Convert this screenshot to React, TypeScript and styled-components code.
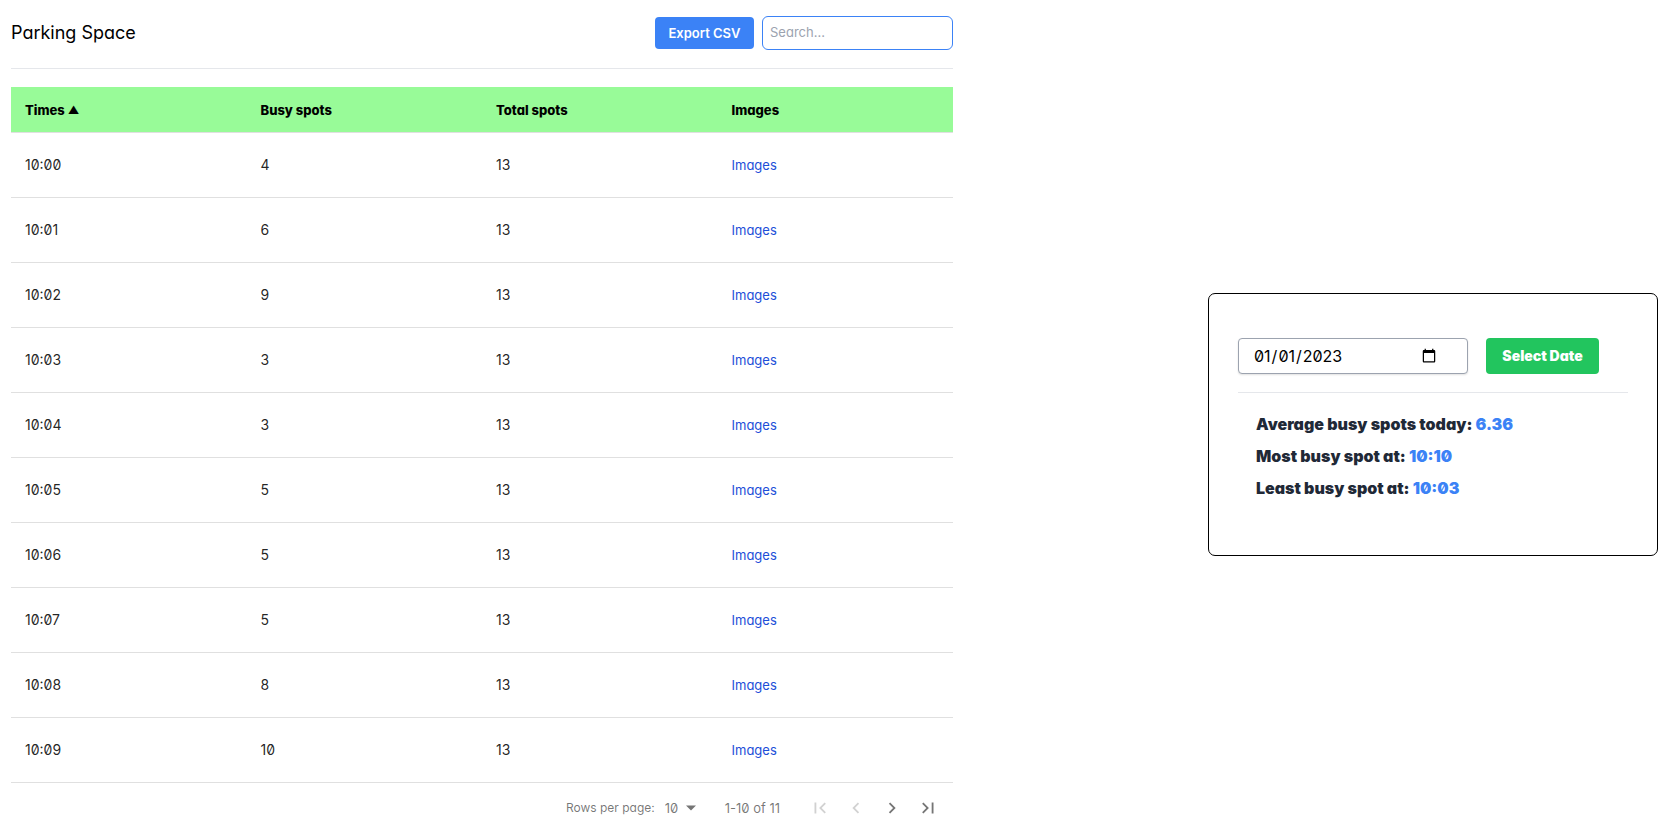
import React, { useState } from "react";
import styled, { createGlobalStyle } from "styled-components";

const GlobalStyle = createGlobalStyle`
  *, *::before, *::after { box-sizing: border-box; }
  body {
    margin: 0;
    background: #fff;
    color: #000;
    font-family: Inter, "Open Sans", "Liberation Sans", sans-serif;
    font-feature-settings: "zero" 1, "cv11" 1;
  }
  button, input, select { font: inherit; font-feature-settings: inherit; color: inherit; margin: 0; }
`;

const Page = styled.main`
  display: grid;
  grid-template-columns: minmax(0, 942fr) minmax(0, 450fr);
  column-gap: 255px;
  align-items: center;
  padding: 16px 15px 0 11px;
`;

const TablePanel = styled.section`
  display: flex;
  flex-direction: column;
`;

const Toolbar = styled.header`
  display: flex;
  align-items: center;
  justify-content: space-between;
  padding-bottom: 18px;
  margin-bottom: 18px;
  border-bottom: 1px solid #e5e7eb;
`;

const Title = styled.h1`
  margin: 0;
  font-size: 18px;
  line-height: 28px;
  font-weight: 400;
`;

const Actions = styled.div`
  display: flex;
  align-items: center;
  gap: 8px;
`;

const ExportButton = styled.button`
  width: 99px;
  height: 32px;
  padding: 0;
  border: 0;
  border-radius: 4px;
  background: #3b82f6;
  color: #fff;
  font-size: 13px;
  font-weight: 600;
  line-height: 20px;
  cursor: pointer;
`;

const SearchInput = styled.input`
  width: 191px;
  height: 34px;
  padding: 0 7px 2px;
  border: 1px solid #3b82f6;
  border-radius: 6px;
  background: #fff;
  font-size: 13px;
  line-height: 20px;
  outline: none;
  &::placeholder { color: #9ca3af; opacity: 1; }
`;

const Table = styled.table`
  width: 100%;
  table-layout: fixed;
  border-collapse: separate;
  border-spacing: 0;
`;

const HeadCell = styled.th`
  height: 46px;
  padding: 0 14px;
  border-bottom: 1px solid #e0e0e0;
  background: #98fb98;
  font-size: 13px;
  font-weight: 800;
  line-height: 20px;
  text-align: left;
`;

const SortButton = styled.button`
  display: inline-flex;
  align-items: center;
  gap: 3px;
  padding: 0;
  border: 0;
  background: none;
  cursor: pointer;
`;

const SortArrow = styled.span`
  font-size: 11px;
`;

const Cell = styled.td`
  height: 65px;
  padding: 0 14px;
  border-bottom: 1px solid #e0e0e0;
  color: rgba(0, 0, 0, 0.87);
  font-size: 14px;
  line-height: 20px;
`;

const ImageLink = styled.a`
  color: #1d4ed8;
  font-size: 13px;
  text-decoration: none;
`;

const Pagination = styled.nav`
  display: flex;
  align-items: center;
  justify-content: flex-end;
  height: 50px;
  padding-right: 7px;
  color: rgba(0, 0, 0, 0.54);
  font-size: 12px;
  line-height: 16px;
`;

const RowsSelectBox = styled.span`
  display: flex;
  align-items: center;
  position: relative;
  margin: 0 24px 0 8px;
`;

const RowsSelect = styled.select`
  appearance: none;
  width: 38px;
  height: 24px;
  padding: 0 20px 0 2px;
  border: 0;
  background: transparent;
  font-size: 13px;
  outline: none;
`;

const SelectArrow = styled.svg`
  position: absolute;
  right: 0;
  width: 20px;
  height: 20px;
  fill: #757575;
  pointer-events: none;
`;

const RangeLabel = styled.span`
  font-size: 13px;
`;

const PageButtons = styled.div`
  display: flex;
  margin-left: 22px;
`;

const PageButton = styled.button`
  display: flex;
  align-items: center;
  justify-content: center;
  width: 36px;
  height: 36px;
  padding: 0;
  border: 0;
  background: none;
  fill: rgba(0, 0, 0, 0.54);
  cursor: pointer;
  &:disabled { fill: rgba(0, 0, 0, 0.18); cursor: default; }
  svg { width: 22px; height: 22px; }
`;

const Card = styled.aside`
  padding: 44px 29px 55px;
  border: 1px solid #000;
  border-radius: 7px;
`;

const DateForm = styled.form`
  display: flex;
  gap: 18px;
  padding-bottom: 18px;
  border-bottom: 1px solid #e5e7eb;
`;

const DateInput = styled.input`
  width: 230px;
  height: 36px;
  padding: 0 28px 0 14px;
  border: 1px solid #9ca3af;
  border-radius: 4px;
  background: #fff;
  box-shadow: 0 1px 2px rgba(0, 0, 0, 0.12);
  font-size: 16px;
  line-height: 24px;
  outline: none;
`;

const SelectDateButton = styled.button`
  width: 113px;
  height: 36px;
  padding: 0;
  border: 0;
  border-radius: 4px;
  background: #22c55e;
  color: #fff;
  font-size: 14px;
  font-weight: 900;
  line-height: 24px;
  cursor: pointer;
`;

const Stats = styled.div`
  display: flex;
  flex-direction: column;
  gap: 8px;
  padding: 19px 18px 0;
`;

const Stat = styled.p`
  margin: 0;
  color: #1f2937;
  font-size: 16px;
  font-weight: 900;
  line-height: 24px;
`;

const StatValue = styled.span`
  color: #3b82f6;
`;

const rows = [
  ["10:00", 4], ["10:01", 6], ["10:02", 9], ["10:03", 3], ["10:04", 3],
  ["10:05", 5], ["10:06", 5], ["10:07", 5], ["10:08", 8], ["10:09", 10],
] as const;

const stats = [
  ["Average busy spots today:", "6.36"],
  ["Most busy spot at:", "10:10"],
  ["Least busy spot at:", "10:03"],
];

const pageIcons = [
  { label: "First page", disabled: true, d: "M18.41 16.59L13.82 12l4.59-4.59L17 6l-6 6 6 6zM6 6h2v12H6z" },
  { label: "Previous page", disabled: true, d: "M15.41 7.41L14 6l-6 6 6 6 1.41-1.41L10.83 12z" },
  { label: "Next page", disabled: false, d: "M10 6L8.59 7.41 13.17 12l-4.58 4.59L10 18l6-6z" },
  { label: "Last page", disabled: false, d: "M5.59 7.41L10.18 12l-4.59 4.59L7 18l6-6-6-6zM16 6h2v12h-2z" },
];

export default function App() {
  const [query, setQuery] = useState("");
  const [date, setDate] = useState("2023-01-01");
  const visible = rows.filter(([time]) => time.includes(query));

  return (
    <>
      <GlobalStyle />
      <Page>
        <TablePanel>
          <Toolbar>
            <Title>Parking Space</Title>
            <Actions>
              <ExportButton type="button">Export CSV</ExportButton>
              <SearchInput
                type="text"
                aria-label="Search"
                placeholder="Search..."
                value={query}
                onChange={(e) => setQuery(e.target.value)}
              />
            </Actions>
          </Toolbar>
          <Table>
            <thead>
              <tr>
                <HeadCell scope="col" aria-sort="ascending">
                  <SortButton type="button">Times <SortArrow>▲</SortArrow></SortButton>
                </HeadCell>
                <HeadCell scope="col">Busy spots</HeadCell>
                <HeadCell scope="col">Total spots</HeadCell>
                <HeadCell scope="col">Images</HeadCell>
              </tr>
            </thead>
            <tbody>
              {visible.map(([time, busy]) => (
                <tr key={time}>
                  <Cell>{time}</Cell>
                  <Cell>{busy}</Cell>
                  <Cell>13</Cell>
                  <Cell><ImageLink href="#images">Images</ImageLink></Cell>
                </tr>
              ))}
            </tbody>
          </Table>
          <Pagination aria-label="Pagination">
            <label htmlFor="rows-per-page">Rows per page:</label>
            <RowsSelectBox>
              <RowsSelect id="rows-per-page" defaultValue="10">
                <option>10</option>
                <option>15</option>
                <option>20</option>
              </RowsSelect>
              <SelectArrow viewBox="0 0 24 24" aria-hidden="true"><path d="M6 9l6 6 6-6z" /></SelectArrow>
            </RowsSelectBox>
            <RangeLabel>1-10 of 11</RangeLabel>
            <PageButtons>
              {pageIcons.map(({ label, disabled, d }) => (
                <PageButton key={label} type="button" aria-label={label} disabled={disabled}>
                  <svg viewBox="0 0 24 24" aria-hidden="true"><path d={d} /></svg>
                </PageButton>
              ))}
            </PageButtons>
          </Pagination>
        </TablePanel>
        <Card>
          <DateForm onSubmit={(e) => e.preventDefault()}>
            <DateInput
              type="date"
              aria-label="Date"
              value={date}
              onChange={(e) => setDate(e.target.value)}
            />
            <SelectDateButton type="submit">Select Date</SelectDateButton>
          </DateForm>
          <Stats>
            {stats.map(([label, value]) => (
              <Stat key={label}>{label} <StatValue>{value}</StatValue></Stat>
            ))}
          </Stats>
        </Card>
      </Page>
    </>
  );
}
